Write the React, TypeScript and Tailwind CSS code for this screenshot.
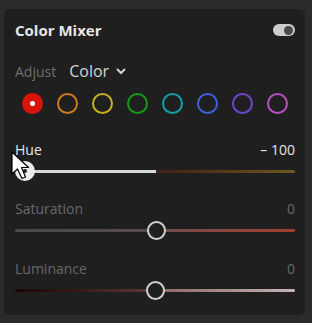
import React from "react";

const font = { fontFamily: '"Open Sans", "Noto Sans", sans-serif' };

function Slider({
  left,
  right,
  thumbX,
  fill,
  active,
}: {
  left: string;
  right: string;
  thumbX: number;
  fill?: boolean;
  active?: boolean;
}) {
  return (
    <div className="relative h-[20px] w-[280px]">
      <div className="absolute left-0 top-[9px] flex h-[3px] w-[280px]">
        <div className="h-full w-[141px] rounded-l-full" style={{ background: left }} />
        <div className="h-full w-[139px] rounded-r-full" style={{ background: right }} />
      </div>
      {fill && (
        <div
          className="absolute top-[9px] h-[3px] bg-[#d8d8d8]"
          style={{ left: thumbX, width: 141 - thumbX }}
        />
      )}
      {active ? (
        <div
          className="absolute top-[0px] flex h-[20px] w-[20px] items-center justify-center rounded-full bg-[#ececec]"
          style={{ left: thumbX - 10 }}
        >
          <div className="h-[4px] w-[4px] rounded-full bg-[#222]" />
        </div>
      ) : (
        <div
          className="absolute top-[1px] h-[19px] w-[19px] rounded-full border-[2px] border-[#cfcfcf] bg-[#1f1f1f]"
          style={{ left: thumbX - 9.5 }}
        />
      )}
    </div>
  );
}

const colors = [
  "#d8150c",
  "#d07a1c",
  "#c4b21c",
  "#139a16",
  "#11a0a6",
  "#3c62d8",
  "#6f46d0",
  "#b850c0",
];

export default function App() {
  return (
    <div className="h-[323px] w-[312px] bg-[#2b2b2b] pt-[9px] pl-[4px]" style={font}>
      <div className="flex h-[306px] w-[301px] flex-col rounded-[6px] bg-[#1f1f1f] pl-[11px]">
        <div className="mt-[11px] flex h-[20px] w-[280px] items-center justify-between">
          <span className="text-[15px] font-bold text-[#e6e6e6]">Color Mixer</span>
          <div className="flex h-[12px] w-[22px] items-center justify-end rounded-full bg-[#cdcdcd] pr-[2px]">
            <div className="h-[9px] w-[9px] rounded-full bg-[#4a4a4a]" />
          </div>
        </div>
        <div className="mt-[20px] flex h-[22px] items-center">
          <span className="text-[14px] text-[#6e6e6e]">Adjust</span>
          <span className="ml-[13px] text-[16px] text-[#d4d4d4]">Color</span>
          <svg className="ml-[6px]" width="12" height="12" viewBox="0 0 12 12">
            <path d="M2 4 L6 8 L10 4" fill="none" stroke="#d4d4d4" strokeWidth="2" />
          </svg>
        </div>
        <div className="mt-[10px] flex h-[22px] w-[286px] items-center gap-[14px] pl-[7px]">
          {colors.map((c, i) => (
            <div
              key={c}
              className="flex h-[21px] w-[21px] items-center justify-center rounded-full border-[2.5px]"
              style={{ borderColor: c, background: i === 0 ? c : "transparent" }}
            >
              {i === 0 && <div className="h-[5px] w-[5px] rounded-full bg-white" />}
            </div>
          ))}
        </div>
        <div className="mt-[26px] flex h-[18px] w-[280px] items-center justify-between text-[14px] text-[#e4e4e4]">
          <span>Hue</span>
          <span>– 100</span>
        </div>
        <div className="relative mt-[3px]">
          <Slider
            left="linear-gradient(to right,#5a2a3a,#4a2a22)"
            right="linear-gradient(to right,#3e2218,#5a3818 50%,#6a5a20)"
            thumbX={10}
            fill
            active
          />
          <svg className="absolute left-[-4px] top-[-10px]" width="20" height="30" viewBox="0 0 20 30">
            <path
              d="M1 1 L1 23 L6.5 18 L11 27.5 L14.5 26 L10.5 16.5 L17.5 16.5 Z"
              fill="#ffffff"
              stroke="#000000"
              strokeWidth="1.2"
              strokeLinejoin="round"
            />
          </svg>
        </div>
        <div className="mt-[18px] flex h-[18px] w-[280px] items-center justify-between text-[14px] text-[#686868]">
          <span>Saturation</span>
          <span>0</span>
        </div>
        <div className="mt-[3px]">
          <Slider
            left="linear-gradient(to right,#4a4a4a,#554a4d)"
            right="linear-gradient(to right,#6e4c4e,#8a4640 50%,#a23e30)"
            thumbX={141}
          />
        </div>
        <div className="mt-[19px] flex h-[18px] w-[280px] items-center justify-between text-[14px] text-[#686868]">
          <span>Luminance</span>
          <span>0</span>
        </div>
        <div className="mt-[3px]">
          <Slider
            left="linear-gradient(to right,#1c0606,#3a1c1c 50%,#5e3c3c)"
            right="linear-gradient(to right,#8a6868,#a88c8c 50%,#c4b4b4)"
            thumbX={140}
          />
        </div>
      </div>
    </div>
  );
}
